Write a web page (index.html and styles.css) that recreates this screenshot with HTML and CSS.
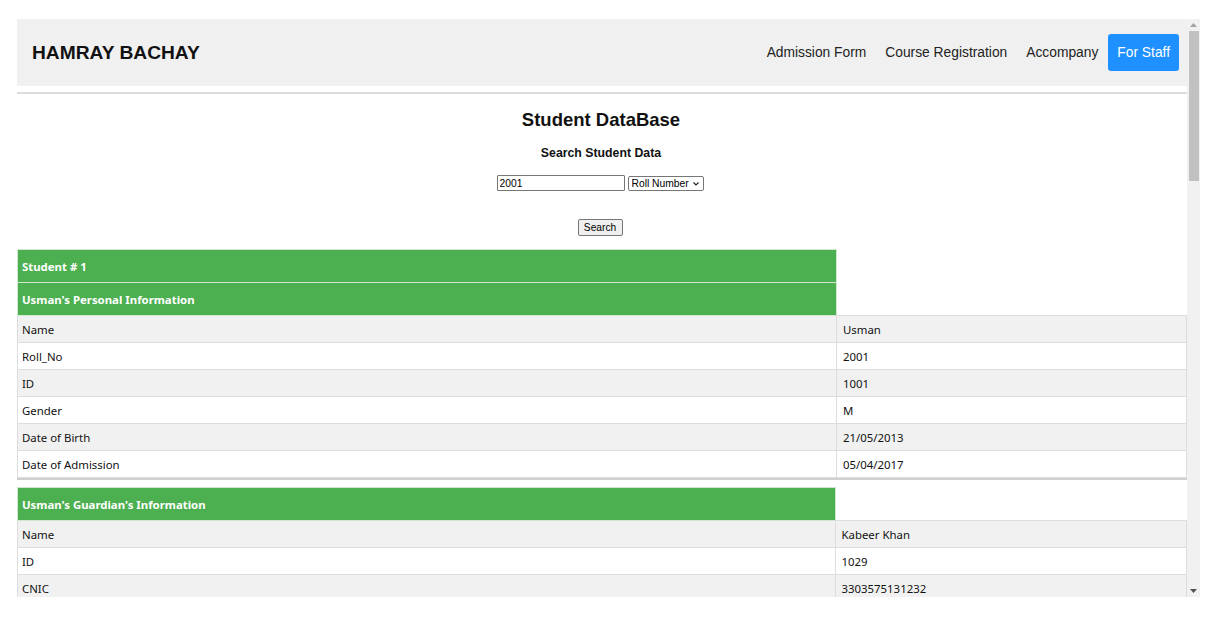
FILE: index.html
```html
<!DOCTYPE html>
<html lang="en">
<head>
<meta charset="utf-8">
<title>Student DataBase</title>
<link rel="stylesheet" href="styles.css">
</head>
<body>
<div class="viewport">
  <div class="page">
    <header class="topbar">
      <div class="logo">HAMRAY BACHAY</div>
      <nav class="nav">
        <a class="nav-link" href="#">Admission Form</a>
        <a class="nav-link" href="#">Course Registration</a>
        <a class="nav-link" href="#">Accompany</a>
        <a class="nav-btn" href="#">For Staff</a>
      </nav>
    </header>
    <div class="rule"></div>

    <main class="content">
      <h2 class="title">Student DataBase</h2>
      <h4 class="subtitle">Search Student Data</h4>
      <form class="search">
        <div class="search-row">
          <input class="search-input" type="text" value="2001">
          <div class="select-wrap">
            <select class="search-select">
              <option>Roll Number</option>
              <option>ID</option>
            </select>
            <svg class="select-chevron" width="6" height="4" viewBox="0 0 6 4"><path d="M0.5 0.5 L3 3 L5.5 0.5" fill="none" stroke="#222" stroke-width="1.1"/></svg>
          </div>
        </div>
        <button class="search-btn" type="button">Search</button>
      </form>

      <table class="data data-personal">
        <colgroup><col class="c1"><col class="c2"></colgroup>
        <tr class="head"><th>Student # 1</th></tr>
        <tr class="head"><th>Usman's Personal Information</th></tr>
        <tr class="odd"><td>Name</td><td>Usman</td></tr>
        <tr><td>Roll_No</td><td>2001</td></tr>
        <tr class="odd"><td>ID</td><td>1001</td></tr>
        <tr><td>Gender</td><td>M</td></tr>
        <tr class="odd"><td>Date of Birth</td><td>21/05/2013</td></tr>
        <tr><td>Date of Admission</td><td>05/04/2017</td></tr>
      </table>
      <div class="divider"></div>

      <table class="data data-guardian">
        <colgroup><col class="c1"><col class="c2"></colgroup>
        <tr class="head"><th>Usman's Guardian's Information</th></tr>
        <tr class="odd"><td>Name</td><td>Kabeer Khan</td></tr>
        <tr><td>ID</td><td>1029</td></tr>
        <tr class="odd"><td>CNIC</td><td>3303575131232</td></tr>
      </table>
    </main>
  </div>

  <div class="scrollbar">
    <div class="sb-btn"><svg width="7" height="4" viewBox="0 0 7 4"><path d="M0 4 L3.5 0 L7 4 Z" fill="#a3a3a3"/></svg></div>
    <div class="sb-thumb"></div>
    <div class="sb-track"></div>
    <div class="sb-btn"><svg width="7" height="4" viewBox="0 0 7 4"><path d="M0 0 L7 0 L3.5 4 Z" fill="#505050"/></svg></div>
  </div>
</div>
</body>
</html>
```
FILE: styles.css
```css
* { box-sizing: border-box; }

html, body {
  margin: 0;
  background: #ffffff;
}

body {
  padding: 19px 20px 0 17px;
  font-family: "Liberation Sans", Arial, sans-serif;
  color: #111;
}

.viewport {
  display: flex;
  width: 1183px;
  height: 578px;
  overflow: hidden;
}

.page {
  width: 1170px;
  flex: none;
  overflow: hidden;
}

/* ---------- header ---------- */
.topbar {
  height: 67px;
  background: #f0f0f0;
  display: flex;
  align-items: center;
  justify-content: space-between;
  padding: 0 8px 0 15px;
}

.logo {
  font-size: 19.2px;
  font-weight: bold;
  color: #111;
}

.nav {
  display: flex;
  align-items: center;
}

.nav-link {
  font-size: 13.8px;
  color: #222;
  text-decoration: none;
  padding: 0 9.5px;
}

.nav-btn {
  font-size: 13.8px;
  color: #fff;
  background: #1e90ff;
  text-decoration: none;
  height: 37px;
  padding: 0 9px;
  margin-left: 0.5px;
  border-radius: 3px;
  display: flex;
  align-items: center;
}

.rule {
  height: 2px;
  margin-top: 6px;
  background: #dcdcdc;
}

/* ---------- search area ---------- */
.content {
  display: flex;
  flex-direction: column;
}

.title {
  margin: 15px 0 0;
  font-size: 18.5px;
  line-height: 22px;
  text-align: center;
  color: #111;
  padding-right: 2px;
}

.subtitle {
  margin: 15px 0 0;
  font-size: 12.3px;
  line-height: 15px;
  text-align: center;
  color: #111;
  padding-right: 2px;
}

.search {
  display: flex;
  flex-direction: column;
  align-items: center;
  margin: 14px 0 0;
  padding-right: 4px;
}

.search-row {
  display: flex;
  align-items: center;
  gap: 3px;
  height: 16px;
}

.search-input {
  width: 128px;
  height: 16px;
  margin: 0;
  padding: 0 2px;
  border: 1px solid #767676;
  border-radius: 1px;
  font-family: "Liberation Sans", Arial, sans-serif;
  font-size: 10.3px;
  color: #000;
  background: #fff;
}

.select-wrap {
  position: relative;
  display: flex;
}

.search-select {
  -webkit-appearance: none;
  appearance: none;
  width: 76px;
  height: 15px;
  margin: 0;
  padding: 0 0 0 3px;
  border: 1px solid #767676;
  border-radius: 2px;
  font-family: "Liberation Sans", Arial, sans-serif;
  font-size: 10.3px;
  line-height: 13px;
  color: #000;
  background: #fff;
}

.select-chevron {
  position: absolute;
  right: 5px;
  top: 6px;
  pointer-events: none;
}

.search-btn {
  margin-top: 28px;
  width: 45px;
  height: 17px;
  padding: 0;
  border: 1px solid #767676;
  border-radius: 2px;
  background: #efefef;
  font-family: "Liberation Sans", Arial, sans-serif;
  font-size: 10.2px;
  color: #000;
}

/* ---------- tables ---------- */
.data {
  width: 100%;
  border-collapse: collapse;
  table-layout: fixed;
  font-family: "Noto Sans", "DejaVu Sans", sans-serif;
  font-size: 11.4px;
  color: #111;
}

.data-personal { margin-top: 13px; }
.data-personal .c1 { width: 819px; }
.data-guardian .c1 { width: 817.5px; }

.data th,
.data td {
  border: 1px solid #dddddd;
  text-align: left;
  padding: 0 4px;
  white-space: nowrap;
}

.data td:nth-child(2) { padding-left: 6px; }

.data th {
  height: 33px;
  background: #4caf50;
  color: #fff;
  font-weight: bold;
  border-color: #d0e6d1;
}

.data td { height: 27px; }

.data tr.odd td { background: #f1f1f1; }

.divider {
  height: 2px;
  background: #cfcfcf;
  margin-bottom: 7px;
}

/* ---------- scrollbar ---------- */
.scrollbar {
  width: 13px;
  flex: none;
  background: #f1f1f1;
  display: flex;
  flex-direction: column;
  align-items: center;
}

.sb-btn {
  height: 12px;
  width: 13px;
  display: flex;
  align-items: center;
  justify-content: center;
  flex: none;
}

.sb-thumb {
  width: 10px;
  height: 150px;
  background: #c1c1c1;
  flex: none;
}

.sb-track { flex: 1; }
```
